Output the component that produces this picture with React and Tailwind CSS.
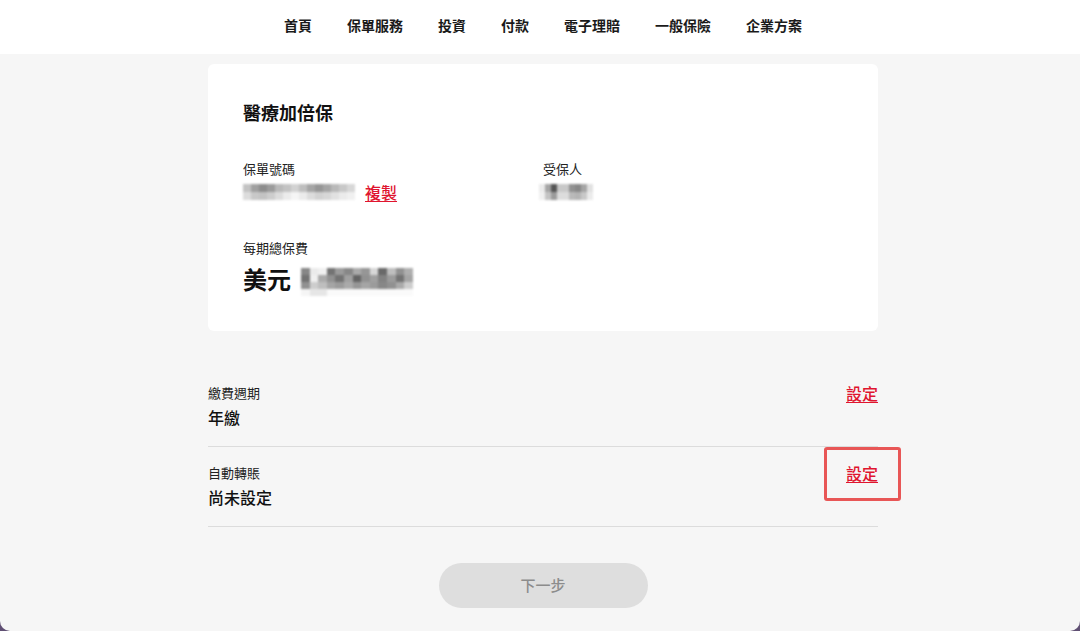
import React from 'react';

const navItems = ['首頁', '保單服務', '投資', '付款', '電子理賠', '一般保險', '企業方案'];

// blurred (pixelated) values, shades of grey per cell
const policyNo = [
  [195, 160, 140, 155, 185, 195, 210, 190, 165, 150, 165, 185, 200, 215],
  [220, 200, 195, 205, 220, 235, 245, 235, 220, 210, 215, 225, 235, 240],
];
const insured = [
  [235, 165, 85, 200, 200, 145, 135, 165, 225],
  [240, 195, 155, 220, 220, 185, 180, 200, 235],
];
const amount = [
  [135, 235, 240, 115, 155, 135, 170, 150, 215, 105, 190, 145, 175],
  [115, 240, 170, 145, 115, 160, 100, 145, 160, 130, 155, 115, 165],
  [145, 205, 190, 165, 155, 170, 150, 165, 155, 135, 145, 170, 205],
  [245, 230, 230, 250, 250, 250, 250, 250, 250, 250, 250, 250, 250],
];

const Mosaic = ({ rows, cell, h }) => (
  <div className="flex flex-col blur-[1.2px]">
    {rows.map((row, i) => (
      <div key={i} className="flex">
        {row.map((v, j) => (
          <div
            key={j}
            style={{ width: cell, height: h, background: `rgb(${v},${v},${v})` }}
          />
        ))}
      </div>
    ))}
  </div>
);

const SettingRow = ({ label, value, boxed }) => (
  <div className="flex items-start justify-between border-b border-[#dcdcdc] pt-[17px] pb-[18px]">
    <div className="flex flex-col">
      <span className="text-[13px] leading-[18px] text-[#222]">{label}</span>
      <span className="mt-1 text-[16px] leading-[22px] font-medium text-[#111]">{value}</span>
    </div>
    <div className="relative leading-[22px] -mt-[2px]">
      <span className="block text-[16px] leading-[22px] font-medium text-[#e0152f] underline underline-offset-2">
        設定
      </span>
      {boxed && (
        <div className="absolute -left-[22px] -top-[15px] w-[77px] h-[54px] border-[3px] border-[#e85656] rounded-[3px]" />
      )}
    </div>
  </div>
);

export default function App() {
  return (
    <div className="bg-[#5f4f73]">
      <div
        className="h-[631px] overflow-hidden rounded-b-[10px] bg-[#f6f6f6] flex flex-col pl-[6px]"
        style={{ fontFamily: '"Noto Sans CJK TC", "Noto Sans", sans-serif' }}
      >
        <header className="h-[54px] -ml-[6px] pl-[6px] bg-white flex items-center justify-center gap-[35px] shrink-0">
          {navItems.map((item) => (
            <span key={item} className="text-[14px] font-bold text-[#1a1a1a] pb-[3px]">
              {item}
            </span>
          ))}
        </header>

        <main className="w-[670px] mx-auto flex flex-col">
          <section className="mt-[10px] bg-white rounded-[6px] px-[35px] pt-[35px] pb-[35px]">
            <h1 className="text-[18px] leading-[26px] font-bold text-[#111]">醫療加倍保</h1>

            <div className="grid grid-cols-2 mt-[35px]">
              <div className="flex flex-col">
                <span className="text-[13px] leading-[18px] text-[#222]">保單號碼</span>
                <div className="mt-[3px] h-[22px] flex items-center gap-[10px]">
                  <Mosaic rows={policyNo} cell={8} h={8} />
                  <span className="text-[16px] leading-[22px] font-medium text-[#e0152f] underline underline-offset-2">
                    複製
                  </span>
                </div>
              </div>
              <div className="flex flex-col">
                <span className="text-[13px] leading-[18px] text-[#222]">受保人</span>
                <div className="mt-[3px] h-[22px] flex items-center -ml-[4px]">
                  <Mosaic rows={insured} cell={6} h={8} />
                </div>
              </div>
            </div>

            <div className="flex flex-col mt-[36px]">
              <span className="text-[13px] leading-[18px] text-[#222]">每期總保費</span>
              <div className="mt-[5px] flex items-center gap-[10px]">
                <span className="text-[24px] leading-[32px] font-bold text-[#111]">美元</span>
                <div className="pt-[6px]">
                  <Mosaic rows={amount} cell={8.6} h={7} />
                </div>
              </div>
            </div>
          </section>

          <section className="mt-[36px] flex flex-col">
            <SettingRow label="繳費週期" value="年繳" />
            <SettingRow label="自動轉賬" value="尚未設定" boxed />
          </section>

          <button className="mt-[36px] mx-auto w-[209px] h-[45px] rounded-full bg-[#dedede] text-[15px] font-medium text-[#8c8c8c]">
            下一步
          </button>
        </main>
      </div>
    </div>
  );
}
